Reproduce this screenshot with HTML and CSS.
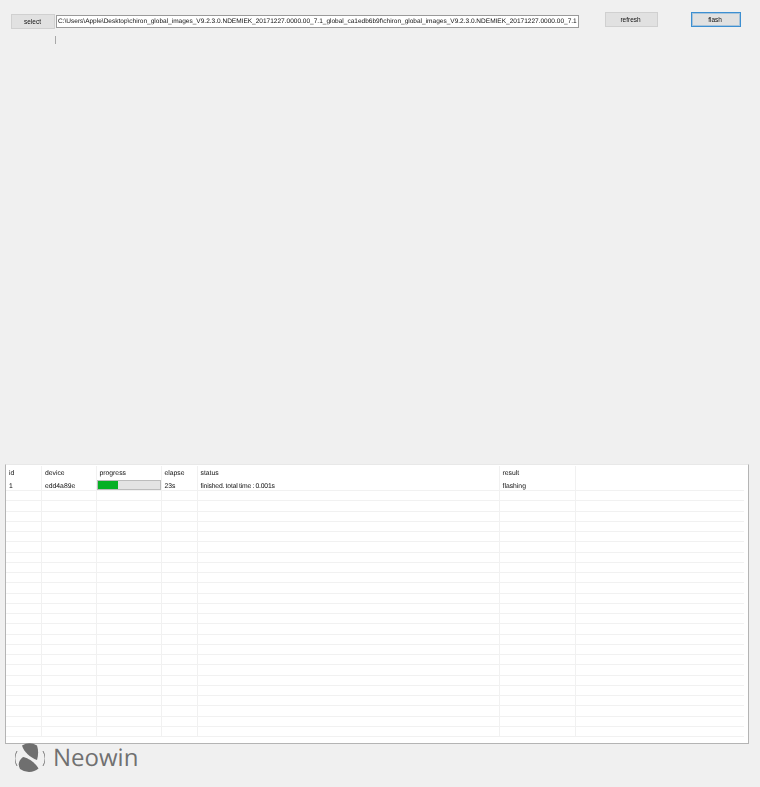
FILE: index.html
```html
<!DOCTYPE html>
<html lang="en">
<head>
<meta charset="utf-8">
<title>flash tool</title>
<link rel="stylesheet" href="styles.css">
</head>
<body>
<div class="app">
  <div class="toolbar">
    <button class="btn btn-select">select</button>
    <div class="path"><span class="path-text">C:\Users\Apple\Desktop\chiron_global_images_V9.2.3.0.NDEMIEK_20171227.0000.00_7.1_global_ca1edb6b9f\chiron_global_images_V9.2.3.0.NDEMIEK_20171227.0000.00_7.1</span></div>
    <button class="btn btn-refresh">refresh</button>
    <button class="btn btn-flash">flash</button>
  </div>
  <div class="tick"></div>
  <div class="grid">
    <div class="row head"><span>id</span><span>device</span><span>progress</span><span>elapse</span><span>status</span><span>result</span><span></span></div>
    <div class="row first"><span>1</span><span>edd4a89e</span><span class="pcell"><i class="bar"><b class="fill"></b></i></span><span>23s</span><span class="status">finished. total time : 0.001s</span><span>flashing</span><span></span></div>
    <div class="row"><span></span><span></span><span></span><span></span><span></span><span></span><span></span></div>
    <div class="row"><span></span><span></span><span></span><span></span><span></span><span></span><span></span></div>
    <div class="row"><span></span><span></span><span></span><span></span><span></span><span></span><span></span></div>
    <div class="row"><span></span><span></span><span></span><span></span><span></span><span></span><span></span></div>
    <div class="row"><span></span><span></span><span></span><span></span><span></span><span></span><span></span></div>
    <div class="row"><span></span><span></span><span></span><span></span><span></span><span></span><span></span></div>
    <div class="row"><span></span><span></span><span></span><span></span><span></span><span></span><span></span></div>
    <div class="row"><span></span><span></span><span></span><span></span><span></span><span></span><span></span></div>
    <div class="row"><span></span><span></span><span></span><span></span><span></span><span></span><span></span></div>
    <div class="row"><span></span><span></span><span></span><span></span><span></span><span></span><span></span></div>
    <div class="row"><span></span><span></span><span></span><span></span><span></span><span></span><span></span></div>
    <div class="row"><span></span><span></span><span></span><span></span><span></span><span></span><span></span></div>
    <div class="row"><span></span><span></span><span></span><span></span><span></span><span></span><span></span></div>
    <div class="row"><span></span><span></span><span></span><span></span><span></span><span></span><span></span></div>
    <div class="row"><span></span><span></span><span></span><span></span><span></span><span></span><span></span></div>
    <div class="row"><span></span><span></span><span></span><span></span><span></span><span></span><span></span></div>
    <div class="row"><span></span><span></span><span></span><span></span><span></span><span></span><span></span></div>
    <div class="row"><span></span><span></span><span></span><span></span><span></span><span></span><span></span></div>
    <div class="row"><span></span><span></span><span></span><span></span><span></span><span></span><span></span></div>
    <div class="row"><span></span><span></span><span></span><span></span><span></span><span></span><span></span></div>
    <div class="row"><span></span><span></span><span></span><span></span><span></span><span></span><span></span></div>
    <div class="row"><span></span><span></span><span></span><span></span><span></span><span></span><span></span></div>
    <div class="row"><span></span><span></span><span></span><span></span><span></span><span></span><span></span></div>
    <div class="row"><span></span><span></span><span></span><span></span><span></span><span></span><span></span></div>
  </div>
  <div class="brand">
    <svg class="mark" viewBox="0 0 30 30" width="30" height="30" aria-hidden="true">
      <path d="M7 2.5 A15 15 0 0 1 22 2.5 C23.5 7 23.5 12 22 17 C15 14.5 9 9 7 2.5Z" fill="#6f6f6f"/>
      <path d="M8 14 C12 14.5 20 19 23.5 25.5 A15 15 0 0 1 5 26 C3 22 3 18 8 14Z" fill="#6f6f6f"/>
      <path d="M2 8 A15 15 0 0 0 2 23" fill="none" stroke="#7d7d7d" stroke-width="1"/>
      <path d="M28 8 A15 15 0 0 1 28 23" fill="none" stroke="#7d7d7d" stroke-width="1"/>
    </svg>
    <span class="word">Neowin</span>
  </div>
</div>
</body>
</html>
```

FILE: styles.css
```css
html, body {
  margin: 0;
  padding: 0;
  background: #f0f0f0;
}
.app {
  width: 760px;
  height: 787px;
  overflow: hidden;
  display: flex;
  flex-direction: column;
  font-family: "Liberation Sans", Arial, sans-serif;
  font-size: 6.8px;
  color: #111;
  text-rendering: geometricPrecision;
}
.toolbar {
  display: flex;
  align-items: flex-start;
  height: 28px;
  padding: 12px 0 0 11px;
  box-sizing: border-box;
}
.btn {
  box-sizing: border-box;
  padding: 0 2px 0 0;
  font: inherit;
  font-size: 6.5px;
  color: inherit;
  background: #e1e1e1;
  border: 1px solid #d0d0d0;
  filter: blur(.2px);
}
.btn-select {
  width: 44px;
  height: 15px;
  margin-top: 2px;
  padding-right: 1px;
}
.path {
  box-sizing: border-box;
  width: 523px;
  height: 13px;
  margin: 3px 0 0 1px;
  padding: 0 0 0 1px;
  line-height: 12px;
  background: #fff;
  border: 1px solid #9a9a9a;
  white-space: nowrap;
}
.path-text {
  display: inline-block;
  font-size: 6.53px;
  filter: blur(.2px);
}
.btn-refresh {
  width: 53px;
  height: 15px;
  margin-left: 26px;
}
.btn-flash {
  width: 50px;
  height: 15px;
  margin-left: 33px;
  border: 1px solid #3d8fd1;
  box-shadow: inset 0 0 0 1px rgba(61, 143, 209, .35);
}
.tick {
  width: 1px;
  height: 8px;
  margin: 8px 0 0 55px;
  background: #a8a8a8;
}
.grid {
  box-sizing: border-box;
  width: 744px;
  height: 280px;
  margin: 420px 0 0 5px;
  padding-top: 1px;
  background: #fff;
  border: 1px solid #b4b4b4;
  border-top-color: #e8e8e8;
  overflow: hidden;
}
.row {
  display: grid;
  grid-template-columns: 36px 54.5px 65px 36px 302px 76px 1fr;
  height: 10.25px;
  box-sizing: border-box;
  border-bottom: 1px solid #f1f1f1;
  margin-right: 4px;
}
.row span {
  box-sizing: border-box;
  padding: 0 0 0 3px;
  border-right: 1px solid #f1f1f1;
  white-space: nowrap;
  filter: blur(.2px);
}
.row span:last-child {
  border-right: 0;
}
.head {
  height: 13px;
  line-height: 16px;
  border-bottom: 0;
}
.first {
  height: 12px;
  line-height: 15px;
}
.row .status {
  letter-spacing: -.17px;
  word-spacing: -.4px;
}
.row .pcell {
  padding: 0;
}
.bar {
  display: block;
  box-sizing: border-box;
  width: 64px;
  height: 10px;
  margin-top: 1px;
  background: #e3e3e3;
  border: 1px solid #bcbcbc;
}
.fill {
  display: block;
  width: 33%;
  height: 100%;
  background: #06b025;
}
.brand {
  display: flex;
  align-items: center;
  gap: 8px;
  margin: -1px 0 0 15px;
  height: 30px;
}
.mark {
  flex: none;
}
.word {
  font-family: "Open Sans", sans-serif;
  font-size: 24px;
  line-height: 30px;
  color: #707070;
}
```
